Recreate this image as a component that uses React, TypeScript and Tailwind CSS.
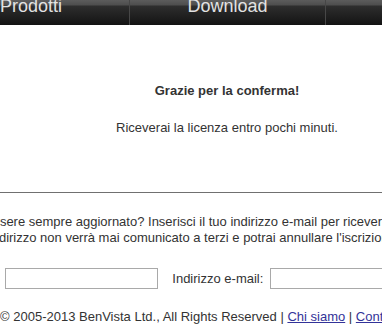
import React from 'react';

const navItems = ['Prodotti', 'Download', 'Supporto'];

export default function App() {
  return (
    <div className="w-[382px] h-[328px] overflow-hidden bg-white font-['Liberation_Sans',Arial,sans-serif] text-[13px] leading-[15px] text-[#333]">
      <div className="w-[588px] -ml-[67px]">
        <nav className="flex h-[25px] overflow-hidden bg-[linear-gradient(to_bottom,#5c5c5c_0px,#4e4e4e_5px,#2e2e2e_6px,#131313_100%)]">
          {navItems.map((item, i) => (
            <div
              key={item}
              className={`w-[196px] shrink-0 flex justify-center ${i > 0 ? 'border-l border-[#474747]' : ''}`}
            >
              <span className="-mt-[3px] text-[18px] leading-[18px] text-[#e2e2e2]">{item}</span>
            </div>
          ))}
        </nav>

        <div className="mt-[58px] flex flex-col items-center">
          <h2 className="font-bold">Grazie per la conferma!</h2>
          <p className="mt-[22px]">Riceverai la licenza entro pochi minuti.</p>
        </div>

        <hr className="mt-[57px] border-0 border-t border-[#707070]" />

        <p className="mt-[21px] pl-[24px] leading-[16px] whitespace-nowrap">
          Vuoi essere sempre aggiornato? Inserisci il tuo indirizzo e-mail per ricevere la nostra newsletter.
          <br />
          Il tuo indirizzo non verrà mai comunicato a terzi e potrai annullare l'iscrizione in qualsiasi momento.
        </p>

        <form className="mt-[22px] pl-[27px] flex items-center whitespace-nowrap">
          <label>Nome:</label>
          <input type="text" className="ml-[7px] w-[153px] h-[21px] border border-[#a9a9a9] bg-white" />
          <label className="ml-[14px]">Indirizzo e-mail:</label>
          <input type="text" className="ml-[7px] w-[153px] h-[21px] border border-[#a9a9a9] bg-white" />
        </form>

        <p className="mt-[20px] text-center whitespace-nowrap">
          © 2005-2013 BenVista Ltd., All Rights Reserved |{' '}
          <a href="#" className="text-[#333399] underline">Chi siamo</a> |{' '}
          <a href="#" className="text-[#333399] underline">Contatti</a> |{' '}
          <a href="#" className="text-[#333399] underline">Privacy</a>
        </p>
      </div>
    </div>
  );
}
